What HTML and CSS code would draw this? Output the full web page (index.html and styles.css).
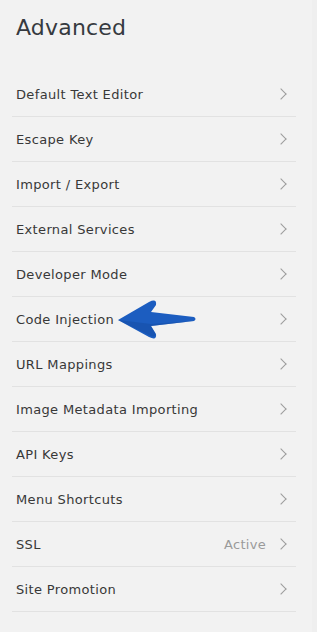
FILE: index.html
```html
<!DOCTYPE html>
<html>
<head>
<meta charset="utf-8">
<link rel="stylesheet" href="styles.css">
</head>
<body>
<div class="panel">
  <h1 class="title">Advanced</h1>
  <ul class="menu">
    <li class="item"><span class="label">Default Text Editor</span><span class="chev"></span></li>
    <li class="item"><span class="label">Escape Key</span><span class="chev"></span></li>
    <li class="item"><span class="label">Import / Export</span><span class="chev"></span></li>
    <li class="item"><span class="label">External Services</span><span class="chev"></span></li>
    <li class="item"><span class="label">Developer Mode</span><span class="chev"></span></li>
    <li class="item"><span class="label">Code Injection</span><span class="chev"></span>
      <svg class="arrow" width="90" height="44" viewBox="0 0 90 44"><path d="M2 22 L33 4 Q41 0 40 7 L35 14 L78 19 Q81 21 78 23 L35 28 L40 36 Q41 43 33 39 Z" fill="#1c5dc0"/><path d="M2 22 L33 37 Q40 41 39 35 L35 28 L78 23 L35 26 Z" fill="#164ea6" opacity="0.6"/></svg>
    </li>
    <li class="item"><span class="label">URL Mappings</span><span class="chev"></span></li>
    <li class="item"><span class="label">Image Metadata Importing</span><span class="chev"></span></li>
    <li class="item"><span class="label">API Keys</span><span class="chev"></span></li>
    <li class="item"><span class="label">Menu Shortcuts</span><span class="chev"></span></li>
    <li class="item"><span class="label">SSL</span><span class="value">Active</span><span class="chev"></span></li>
    <li class="item"><span class="label">Site Promotion</span><span class="chev"></span></li>
  </ul>
</div>
<div class="edge"></div>
</body>
</html>
```
FILE: styles.css
```css
html, body {
  margin: 0;
  padding: 0;
  background: #f2f2f2;
  height: 632px;
  overflow: hidden;
}
body {
  font-family: "DejaVu Sans", sans-serif;
  color: #383838;
  display: flex;
}
.panel {
  width: 312px;
}
.edge {
  width: 5px;
  background: #efefef;
}
.title {
  margin: 0;
  padding: 15px 0 0 16px;
  height: 57px;
  font-size: 22px;
  font-weight: normal;
  color: #363a40;
  letter-spacing: 0.2px;
}
.menu {
  list-style: none;
  margin: 0 16px 0 12px;
  padding: 0;
}
.item {
  position: relative;
  display: flex;
  align-items: center;
  height: 44px;
  border-bottom: 1px solid #e2e2e2;
  padding: 0 9px 0 4px;
  font-size: 13px;
}
.label {
  flex: 1;
  letter-spacing: 0.35px;
}
.value {
  color: #9a9a9a;
  margin-right: 11px;
  letter-spacing: 0.3px;
}
.chev {
  width: 7px;
  height: 7px;
  border-right: 1.3px solid #9c9c9c;
  border-top: 1.3px solid #9c9c9c;
  transform: rotate(45deg);
  margin-right: 2px;
}
.arrow {
  position: absolute;
  left: 104px;
  top: 1px;
}
```
